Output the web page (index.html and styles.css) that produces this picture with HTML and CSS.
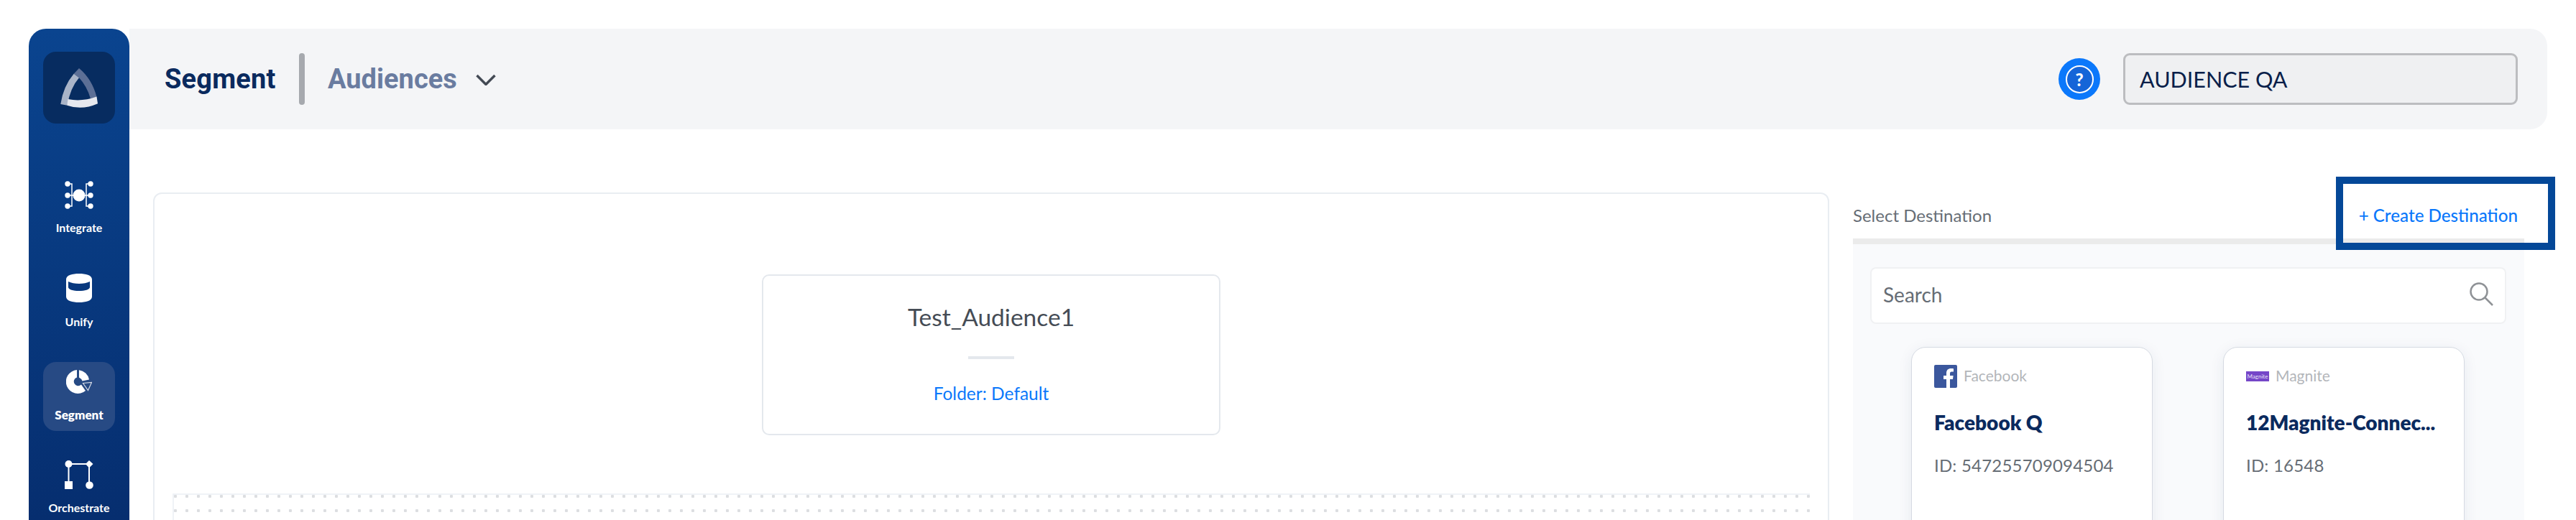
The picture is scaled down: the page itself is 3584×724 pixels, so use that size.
FILE: index.html
```html
<!DOCTYPE html>
<html lang="en">
<head>
    <meta charset="UTF-8">
    <title>Segment - Audiences</title>
    <link rel="stylesheet" href="styles.css">
</head>
<body>
    <div class="app">
        <div class="sidebar">
            <div class="logo">
                <svg viewBox="0 0 100 100" width="100" height="100">
                    <path fill="#5c6f96" d="M50 23L42.7 30.7L50 36.3Q61 48 66 65.5L74.5 63Q68 38 50 23Z"/>
                    <path fill="#a9b4c8" d="M42.7 30.7L50 36.3Q38 50 33.5 74.7L24.3 73Q28 48 42.7 30.7Z"/>
                    <path fill="#e6e8ee" d="M34.5 66Q54 70 74.5 62.5L76 72.3Q54 82 33.3 74.7Z"/>
                </svg>
            </div>
            <a class="nav-item nav-integrate">
                <svg viewBox="0 0 40 40" width="40" height="40">
                    <circle cx="20" cy="20" r="8.500" fill="#fff"/>
                    <g fill="#fff">
                        <circle cx="4" cy="4" r="3.7"/><circle cx="4" cy="20" r="3.7"/><circle cx="4" cy="35" r="3.7"/>
                        <circle cx="36" cy="4" r="3.7"/><circle cx="36" cy="20" r="3.7"/><circle cx="36" cy="35" r="3.7"/>
                    </g>
                    <path fill="none" stroke="#fff" stroke-width="1.5" d="M4 4H10V35H4M4 20H14M36 4H30V35H36M36 20H26"/>
                </svg>
                <span>Integrate</span>
            </a>
            <a class="nav-item nav-unify">
                <svg viewBox="0 0 36 40" width="36" height="40">
                    <path fill="#fff" fill-rule="evenodd" d="M0 8C0 2 9 0 18 0S36 2 36 8V32C36 38 27 40 18 40S0 38 0 32ZM3 11V19C3 22 10 24 18 24S33 22 33 19V11C29 13 24 14 18 14S7 13 3 11Z"/>
                </svg>
                <span>Unify</span>
            </a>
            <a class="nav-item nav-segment active">
                <svg viewBox="0 0 36 34" width="36" height="34">
                    <path fill="#fff" d="M15 0A16.5 16.5 0 1 0 27 29L21 20.500A6 6 0 1 1 15 10.500Z"/>
                    <path fill="#fff" d="M18 0.200A16.500 16.500 0 0 1 32 13.500L22.500 15.500Q21 12 18 10.500Z"/>
                    <path fill="none" stroke="#d5dbe6" stroke-width="1.200" d="M23.500 18.500L35.500 17.500L30.500 28.500Z"/>
                </svg>
                <span>Segment</span>
            </a>
            <a class="nav-item nav-orchestrate">
                <svg viewBox="0 0 40 40" width="40" height="40">
                    <path fill="none" stroke="#fff" stroke-width="2" d="M5.500 5H34V34M5.500 5V30"/>
                    <circle cx="5.500" cy="5" r="5" fill="#fff"/>
                    <path fill="#fff" d="M34 0L39.500 5L34 10.500L29 5Z"/>
                    <rect x="0" y="29" width="11" height="11" fill="#fff"/>
                    <circle cx="34.500" cy="34.500" r="5.300" fill="#fff"/>
                </svg>
                <span>Orchestrate</span>
            </a>
        </div>

        <div class="main">
            <div class="header">
                <div class="crumbs">
                    <span class="crumb-title">Segment</span>
                    <span class="crumb-sep"></span>
                    <span class="crumb-sub">Audiences</span>
                    <svg class="chevron" viewBox="0 0 28 16" width="28" height="16">
                        <path fill="none" stroke="#434a54" stroke-width="3.500" d="M1.500 2L14 14.500L26.500 2"/>
                    </svg>
                </div>
                <div class="header-right">
                    <div class="help"><span>?</span></div>
                    <div class="account">AUDIENCE QA</div>
                </div>
            </div>

            <div class="content">
                <div class="panel">
                    <div class="audience-card">
                        <div class="audience-name">Test_Audience1</div>
                        <div class="audience-rule"></div>
                        <div class="audience-folder">Folder: Default</div>
                    </div>
                    <div class="canvas"></div>
                </div>

                <div class="dest">
                    <div class="dest-tabs">
                        <span class="dest-label">Select Destination</span>
                        <a class="dest-create">+ Create Destination</a>
                    </div>
                    <div class="highlight"></div>
                    <div class="dest-body">
                        <div class="search">
                            <span>Search</span>
                            <svg viewBox="0 0 34 34" width="34" height="34">
                                <circle cx="14" cy="14" r="11.500" fill="none" stroke="#8f9296" stroke-width="2.500"/>
                                <path stroke="#8f9296" stroke-width="2.500" d="M22.500 22.500L33 33"/>
                            </svg>
                        </div>
                        <div class="dest-cards">
                            <div class="dest-card">
                                <div class="dest-type">
                                    <svg class="type-fb" viewBox="0 0 32 32" width="32" height="32">
                                        <rect width="32" height="32" rx="2" fill="#3b579d"/>
                                        <path fill="#fff" d="M22 32V20H26L26.600 15H22V12C22 10.500 22.500 9.500 24.500 9.500H27V5.200C26.500 5.100 25 5 23.300 5C19.700 5 17 7.200 17 11.400V15H13V20H17V32Z"/>
                                    </svg>
                                    <span>Facebook</span>
                                </div>
                                <div class="dest-name">Facebook Q</div>
                                <div class="dest-id">ID: 547255709094504</div>
                            </div>
                            <div class="dest-card">
                                <div class="dest-type">
                                    <div class="type-magnite">Magnite</div>
                                    <span>Magnite</span>
                                </div>
                                <div class="dest-name">12Magnite-Connec...</div>
                                <div class="dest-id">ID: 16548</div>
                            </div>
                        </div>
                    </div>
                </div>
            </div>
        </div>
    </div>
</body>
</html>
```

FILE: styles.css
```css
html, body { height: 724px; overflow: hidden; }
body { margin: 0; background: #fff; font-family: Lato, "Open Sans", sans-serif; }
.app { display: flex; padding: 40px 40px 0; }

.sidebar { width: 140px; flex: none; height: 684px; border-radius: 24px 24px 0 0; background: linear-gradient(#0a448f, #062e6f); display: flex; flex-direction: column; align-items: center; padding-top: 32px; box-sizing: border-box; }
.logo { width: 100px; height: 100px; background: #072c60; border-radius: 18px; }
.nav-item { width: 100px; height: 96px; display: flex; flex-direction: column; align-items: center; color: #fff; font-size: 16px; font-weight: 700; border-radius: 18px; flex: none; }
.nav-item span { display: block; line-height: 20px; }
.nav-integrate { margin-top: 80px; height: 96px; }
.nav-integrate span { margin-top: 15px; }
.nav-unify { margin-top: 33px; }
.nav-unify span { margin-top: 17px; }
.nav-segment { margin-top: 27px; padding-top: 11px; box-sizing: border-box; }
.nav-segment span { margin-top: 19px; }
.nav-orchestrate { margin-top: 41px; }
.nav-orchestrate span { margin-top: 16px; }
.active { background: #274a84; font-weight: 800; font-size: 17px; }

.main { flex: 1; min-width: 0; }
.header { height: 140px; background: #f4f5f7; border-radius: 0 24px 24px 0; display: flex; justify-content: space-between; align-items: center; padding: 0 41px 0 50px; }
.crumbs { display: flex; align-items: center; }
.crumb-title { font-family: Roboto, sans-serif; font-size: 38px; font-weight: 700; color: #0a2a5e; width: 186px; margin-left: -1px; letter-spacing: 0.2px; }
.crumb-sep { width: 8px; height: 72px; border-radius: 4px; background: #a6a9ae; margin-right: 32px; margin-left: 1px; }
.crumb-sub { font-family: Roboto, sans-serif; font-size: 38px; font-weight: 700; color: #6a7ca0; width: 206px; }
.chevron { margin-top: 2px; }
.header-right { display: flex; align-items: center; gap: 32px; }
.help { width: 58px; height: 58px; border-radius: 50%; background: #0b78fb; display: flex; align-items: center; justify-content: center; }
.help span { width: 35px; height: 35px; border: 2px solid #fff; border-radius: 50%; background: #1565d8; color: #fff; font-size: 24px; font-weight: 900; text-align: center; line-height: 35px; }
.account { width: 549px; height: 72px; box-sizing: border-box; background: #eff0f2; border: 3px solid #bcbdc0; border-radius: 9px; padding-left: 20px; font-size: 30.5px; line-height: 66px; color: #0a1f4a; }

.content { display: flex; gap: 33px; padding: 88px 32px 0 33px; }
.panel { width: 2332px; height: 700px; flex: none; box-sizing: border-box; border: 2px solid #e9edf2; border-radius: 12px; padding: 112px 25px 0; }
.audience-card { width: 638px; height: 224px; box-sizing: border-box; margin: 0 auto; border: 2px solid #e4e8ed; border-radius: 10px; text-align: center; padding-top: 37px; }
.audience-name { font-size: 33.500px; line-height: 40px; color: #454c55; }
.audience-rule { width: 64px; height: 4px; background: #e4e8ed; margin: 35px auto 0; }
.audience-folder { margin-top: 32px; font-size: 24.500px; line-height: 32px; color: #0b78fb; }
.canvas { height: 300px; margin-top: 81px; border-top: 2px solid #f0f3f7; border-left: 2px solid #f0f3f7; background-image: radial-gradient(circle at 2px 2px, #dcdee1 2px, transparent 2.5px); background-size: 16px 20px; }

.dest { width: 934px; flex: none; position: relative; }
.dest-tabs { height: 72px; box-sizing: border-box; display: flex; justify-content: space-between; align-items: center; padding: 0 9px 2px 0; border-bottom: 8px solid #ebebeb; }
.dest-label { font-size: 24px; color: #666d75; }
.dest-create { font-size: 24.200px; color: #0b78fb; font-weight: 500; }
/* annotation box drawn on top of the screenshot */
.highlight { position: absolute; left: 672px; top: -22px; width: 285px; height: 82px; border: 10px solid #044898; }
.dest-body { background: #f9fafc; height: 400px; padding: 32px 25px 0 24px; }
.search { height: 79px; box-sizing: border-box; background: #fff; border: 2px solid #f0f1f3; border-radius: 8px; display: flex; justify-content: space-between; align-items: flex-start; padding: 19px 16px 0 16px; font-size: 28px; color: #666d75; }
.search svg { margin-top: -1px; }
.dest-cards { display: flex; justify-content: center; gap: 98px; margin-top: 32px; padding-right: 1px; }
.dest-card { width: 336px; height: 400px; box-sizing: border-box; background: #fff; border: 1px solid #d6dae2; border-radius: 20px; box-shadow: 0 4px 20px rgba(30, 50, 90, 0.08); padding: 24px 31px 0; }
.dest-type { height: 32px; display: flex; align-items: center; gap: 9px; font-size: 21px; color: #b3b6ba; }
.dest-type span { margin-top: -3px; }
.type-fb { flex: none; }
.type-magnite { width: 32px; height: 14px; background: #7546c8; color: #e8e0f8; font-size: 8px; text-align: center; line-height: 14px; flex: none; }
.dest-name { margin-top: 28px; font-size: 28px; line-height: 40px; font-weight: 800; color: #0a2a5e; white-space: nowrap; }
.dest-id { margin-top: 24px; font-size: 24px; line-height: 32px; color: #666d75; letter-spacing: 0.2px; }
```
